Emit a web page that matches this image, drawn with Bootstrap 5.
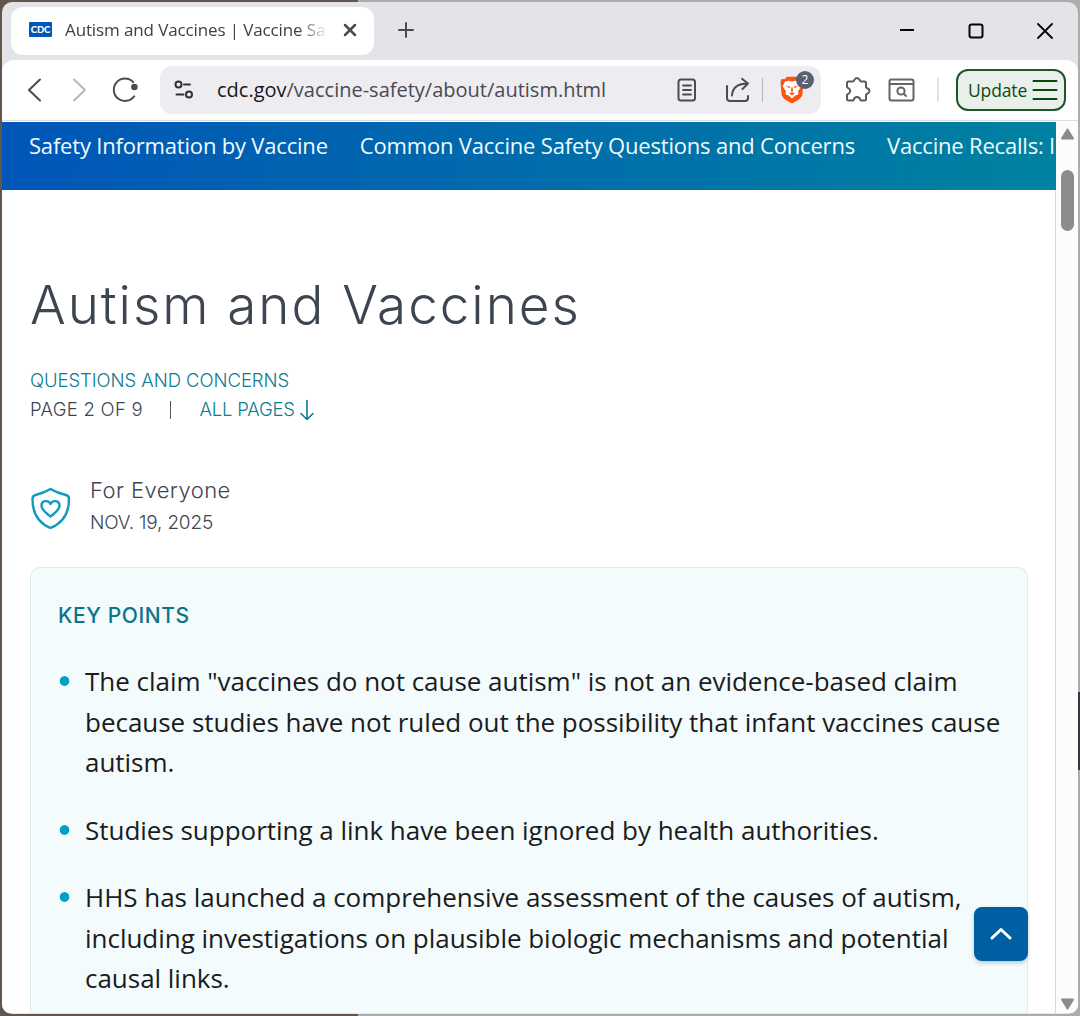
<!DOCTYPE html>
<html lang="en">
<head>
<meta charset="utf-8">
<title>Autism and Vaccines | Vaccine Safety</title>
<link href="https://cdn.jsdelivr.net/npm/bootstrap@5.3.0/dist/css/bootstrap.min.css" rel="stylesheet">
<style>
html,body{height:1016px;overflow:hidden}
body{font-family:"Open Sans","Noto Sans",sans-serif;background:linear-gradient(#37383d,#37383d) 1078px 692px/2px 78px no-repeat,linear-gradient(90deg,#63564c 0 358px,#acacac 358px);padding:2px}
svg{display:block;flex:none;fill:none;stroke:#4b4b50;stroke-width:2;stroke-linecap:round;stroke-linejoin:round}
.win{width:1076px;height:1012px;border-radius:10px;background:#e4e3e8}
.tabstrip{height:58px;padding:4px 25px 4px 9px}
.tab{width:363px;height:48px;border-radius:12px;background:#fff;padding:0 17px 0 18px;font-size:17px;letter-spacing:-.12px;color:#3e3e42}
.favicon{width:23px;height:15px;background:#0057b7;border-radius:1px;color:#fff;font:900 9.5px/15px Lato,sans-serif;text-align:center;margin-top:-3px}
.tabtitle{width:262px;margin:-3px 0 0 13px;-webkit-mask-image:linear-gradient(90deg,#000 232px,transparent 264px);mask-image:linear-gradient(90deg,#000 232px,transparent 264px)}
.tab svg,.newtab{margin-top:-2px}
.newtab{margin-left:23px}
.wctl{gap:53px}
.wctl svg{stroke:#050507}
.toolbar{height:61px;background:#fff;border-radius:12px 12px 0 0;border-bottom:1px solid #dcdce0;padding:0 12px 0 25px}
.forward{margin-left:30px}
.reload{margin-left:24px}
.address{width:661px;height:48px;border-radius:12px;background:#edecf1;margin-left:21px;padding:0 17px 0 14px}
.url{font-size:20px;color:#4a4a50;margin-left:23px}
.url b{font-weight:400;color:#17171a}
.tune{stroke:#303036}
.doc{margin-right:28px}
.share{margin-right:11px}
.sep{width:1px;height:24px;background:#b4b4ba;margin-right:17px}
.lion{stroke:none}
.count{left:16px;top:-5px;width:18px;height:18px;border-radius:9px;background:#5c5f70;color:#fff;font-size:12px;line-height:17px}
.ext{margin-left:23px}
.find{margin-left:17px}
.sep2{width:2px;height:24px;background:#e2e2e6;margin-left:22px}
.update{width:110px;height:42px;border:2px solid #1f5527;border-radius:12px;background:#e9efeb;color:#0a4c10;font-size:17.5px;letter-spacing:-.15px;padding:0 6px 0 10px}
.update svg{stroke:#064b0b}
.page{height:892px;background:#fff;padding-top:1px}
.content{width:1054px}
.topics{height:68px;background:linear-gradient(97deg,#0057b7 3%,#0081a1 98%);padding:6px 0 0 27px;gap:32px;font-size:22px;line-height:34px;letter-spacing:-.19px;color:#f0fbff}
.article{padding:77px 28px 0}
.geo{font-family:Inter,sans-serif;font-weight:300;color:#3d4551}
.title{font-size:53px;line-height:76px;margin:0;letter-spacing:1.95px}
.meta{font-size:18.5px;line-height:29px;margin-top:23px}
.bar{width:1.5px;height:18px;background:#5a5560;margin:0 28px 0 27px}
.qc{letter-spacing:-.06px}
.pg{letter-spacing:.27px}
.all{letter-spacing:-.2px}
.teal{color:#0b7c91}
.aud{margin-top:48px;height:67px;gap:19px}
.shield{margin:5px 0 0 1px}
.who{font-size:22px;line-height:34px;letter-spacing:.42px}
.date{font-size:19px;line-height:32px;letter-spacing:-.18px}
.keys{width:998px;height:447px;margin-top:28px;border:1px solid #dcebee;border-bottom:0;border-radius:10px 10px 0 0;background:#f3fbfd;padding:30px 27px 0}
.keys h2{font-size:21px;line-height:36px;margin:0 0 27px;font-weight:500;letter-spacing:.6px;color:#0b7489}
.points{font-size:26px;line-height:40.5px;letter-spacing:-.025px;color:#1b1b20;margin:0}
.points li{margin-bottom:27px;padding-left:27px;background:radial-gradient(circle at 6.500px 20px,#009ec1 4.4px,transparent 5.2px)}
.totop{left:974px;top:907px;width:54px;height:54px;border-radius:8px;background:#005ea2;box-shadow:0 2px 4px #0003}
.totop svg{stroke:#fff;stroke-width:3}
.scroll{width:23px;margin-left:-1px;background:#fcfcfc;border-left:1px solid #d9d9dc;padding:6px 0 3px}
.thumb{width:13px;height:61px;border-radius:7px;background:#8b8b8b;margin:30px 0 auto}
.scroll svg{fill:#8b8b8b;stroke:#8b8b8b}
</style>
<script src="https://cdn.jsdelivr.net/npm/bootstrap@5.3.0/dist/js/bootstrap.bundle.min.js"></script>
</head>
<body>
<div class="win overflow-hidden">
 <header class="tabstrip d-flex align-items-center">
  <div class="tab d-flex align-items-center">
   <span class="favicon">CDC</span>
   <span class="tabtitle text-nowrap overflow-hidden">Autism and Vaccines | Vaccine Sa</span>
   <svg class="ms-auto" width="14" height="14"><path d="M2 2l10 10M12 2L2 12" stroke-width="2.5"/></svg>
  </div>
  <svg class="newtab" width="18" height="18"><path d="M9 2v14M2 9h14"/></svg>
  <div class="wctl d-flex align-items-center ms-auto">
   <svg width="16" height="16" viewBox="0 0 16 16"><path d="M1 7h14" stroke-linecap="butt"/></svg>
   <svg width="16" height="16" viewBox="0 0 16 16"><rect x="1.500" y="1.500" width="13" height="13" rx="2"/></svg>
   <svg width="16" height="16" viewBox="0 0 16 16"><path d="M1 1l14 14M15 1L1 15" stroke-width="1.800"/></svg>
  </div>
 </header>
 <div class="toolbar d-flex align-items-center">
  <svg width="15" height="24" viewBox="0 0 15 24"><path d="M13 1.500L2 12l11 10.500"/></svg>
  <svg class="forward" width="15" height="24" viewBox="0 0 15 24"><path d="M2 1.500L13 12 2 22.500" stroke="#b8b8bc"/></svg>
  <svg class="reload" width="28" height="28" viewBox="0 0 28 28"><path d="M22.200 6.100A11.200 11.200 0 1 0 23.200 20.200"/><circle cx="23.400" cy="11" r="3.300" fill="#4b4b50" stroke="none"/></svg>
  <div class="address d-flex align-items-center">
   <svg class="tune" width="20" height="20" viewBox="0 0 20 20"><circle cx="4.500" cy="4.500" r="3"/><path d="M10 4.500h6M2.500 14.500h7"/><circle cx="15" cy="14.500" r="3"/></svg>
   <span class="url text-nowrap"><b>cdc.gov</b>/vaccine-safety/about/autism.html</span>
   <svg class="doc ms-auto" width="20" height="24" viewBox="0 0 20 24"><rect x="1.500" y="1.500" width="16.500" height="21" rx="2.500"/><path d="M6 7.500h8M6 12h8M6 16.500h8" stroke-width="1.800"/></svg>
   <svg class="share" width="26" height="26" viewBox="0 0 26 26"><path d="M2 9v12a3 3 0 0 0 3 3h15a3 3 0 0 0 3-3v-2M7 18.500c.5-8 6-12 16-12M17 1.800l6 4.700-5.500 5.500"/></svg>
   <span class="sep"></span>
   <div class="position-relative">
    <svg class="lion" width="24" height="28" viewBox="0 0 24 28"><path fill="#fb5310" d="M7 .8h10l2.500 2.500 3-.2L23.500 6l-1.100 12.500c-.5 3.500-5.500 6.500-10.400 9-4.900-2.500-9.900-5.500-10.400-9L.5 6l1-2.900 3 .2z"/><path fill="#fff" d="M5 5.500l4-.8 3 .8 3-.8 4 .8 2.300 5-3.300 4.700.6 3-3.200 1.300L12 22.500l-3.400-3-3.200-1.300.6-3-3.300-4.700z"/><path fill="#fb5310" d="M5.500 9.500l4.800 1.300-1 1.500zM18.500 9.500l-4.800 1.300 1 1.500zM9 17.500l3-1.300 3 1.300-3 1.800zM11.600 11h.8l.8 4-1.200.8-1.200-.8z"/></svg>
    <span class="count position-absolute text-center">2</span>
   </div>
  </div>
  <svg class="ext" width="27" height="28" viewBox="0 0 27 28"><path d="M4.500 5.500H9c1.500 0 1-3.500 4-3.500s2.500 3.500 4 3.500h3.500c1 0 1.500.5 1.500 1.500v4c0 1.500 3.500 1 3.500 4s-3.500 2.500-3.500 4v4c0 1-.5 1.500-1.500 1.500H17c-1 0-.5-3.500-4-3.500s-3 3.500-4 3.500H4.500C3.500 24.500 3 24 3 23v-4c0-1 3.200-1 3.200-4S3 12 3 11V7c0-1 .5-1.500 1.500-1.500z" stroke="#5a5a60"/></svg>
  <svg class="find" width="27" height="24" viewBox="0 0 27 24"><g stroke="#64646a"><rect x="1.500" y="1.500" width="24" height="21" rx="2"/><path d="M2 6h23"/><circle cx="13" cy="13" r="3.600"/><path d="M16 16l2 2"/></g></svg>
  <span class="sep2"></span>
  <div class="update ms-auto d-flex align-items-center justify-content-between"><span>Update</span><svg width="26" height="22" viewBox="0 0 26 22"><path d="M1.500 2h23M1.500 11h23M1.500 20h23"/></svg></div>
 </div>
 <div class="page d-flex">
  <main class="content overflow-hidden">
   <nav class="topics position-relative z-1 d-flex text-nowrap overflow-hidden"><span>Safety Information by Vaccine</span><span>Common Vaccine Safety Questions and Concerns</span><span>Vaccine Recalls: I</span></nav>
   <div class="article">
    <h1 class="title geo">Autism and Vaccines</h1>
    <div class="meta geo">
     <div class="teal qc">QUESTIONS AND CONCERNS</div>
     <div class="d-flex align-items-center"><span class="pg">PAGE 2 OF 9</span><span class="bar"></span><span class="all teal">ALL PAGES</span>
      <svg class="ms-1" width="16" height="22" viewBox="0 0 16 22"><path d="M8 1.500v19M2 14.500l6 6 6-6" stroke="#0b7c91" stroke-width="1.600"/></svg></div>
    </div>
    <div class="aud geo d-flex align-items-center">
     <svg class="shield" width="40" height="44" viewBox="0 0 40 44"><g stroke="#109dbb" stroke-width="2.400"><path d="M19.500 3c5 3 11 5 15.500 6 2.300.6 3 2 3 4C38 28 30.500 37.500 19.500 42 8.500 37.500 1.500 28 1.500 13c0-2 .7-3.400 3-4C8.500 8 14.500 6 19.500 3z"/><path d="M19.500 30.500c-4-3-9-6.500-9-11 0-5 7-6 9-1.500 2-4.500 9-3.500 9 1.500 0 4.500-5 8-9 11z"/></g></svg>
     <div><div class="who">For Everyone</div><div class="date">NOV. 19, 2025</div></div>
    </div>
    <section class="keys">
     <h2 class="geo">KEY POINTS</h2>
     <ul class="points list-unstyled text-nowrap">
      <li>The claim "vaccines do not cause autism" is not an evidence-based claim<br>because studies have not ruled out the possibility that infant vaccines cause<br>autism.</li>
      <li>Studies supporting a link have been ignored by health authorities.</li>
      <li>HHS has launched a comprehensive assessment of the causes of autism,<br>including investigations on plausible biologic mechanisms and potential<br>causal links.</li>
     </ul>
    </section>
   </div>
  </main>
  <aside class="scroll d-flex flex-column align-items-center flex-shrink-0">
   <svg width="15" height="12" viewBox="0 0 15 12"><path d="M7.500 1.500l5.500 9H2z"/></svg>
   <div class="thumb"></div>
   <svg width="15" height="12" viewBox="0 0 15 12"><path d="M7.500 10.500l5.500-9H2z"/></svg>
  </aside>
 </div>
</div>
<div class="totop position-absolute z-2 d-flex align-items-center justify-content-center"><svg width="22" height="14" viewBox="0 0 22 14"><path d="M2 11l9-8.500 9 8.500"/></svg></div>
</body>
</html>
